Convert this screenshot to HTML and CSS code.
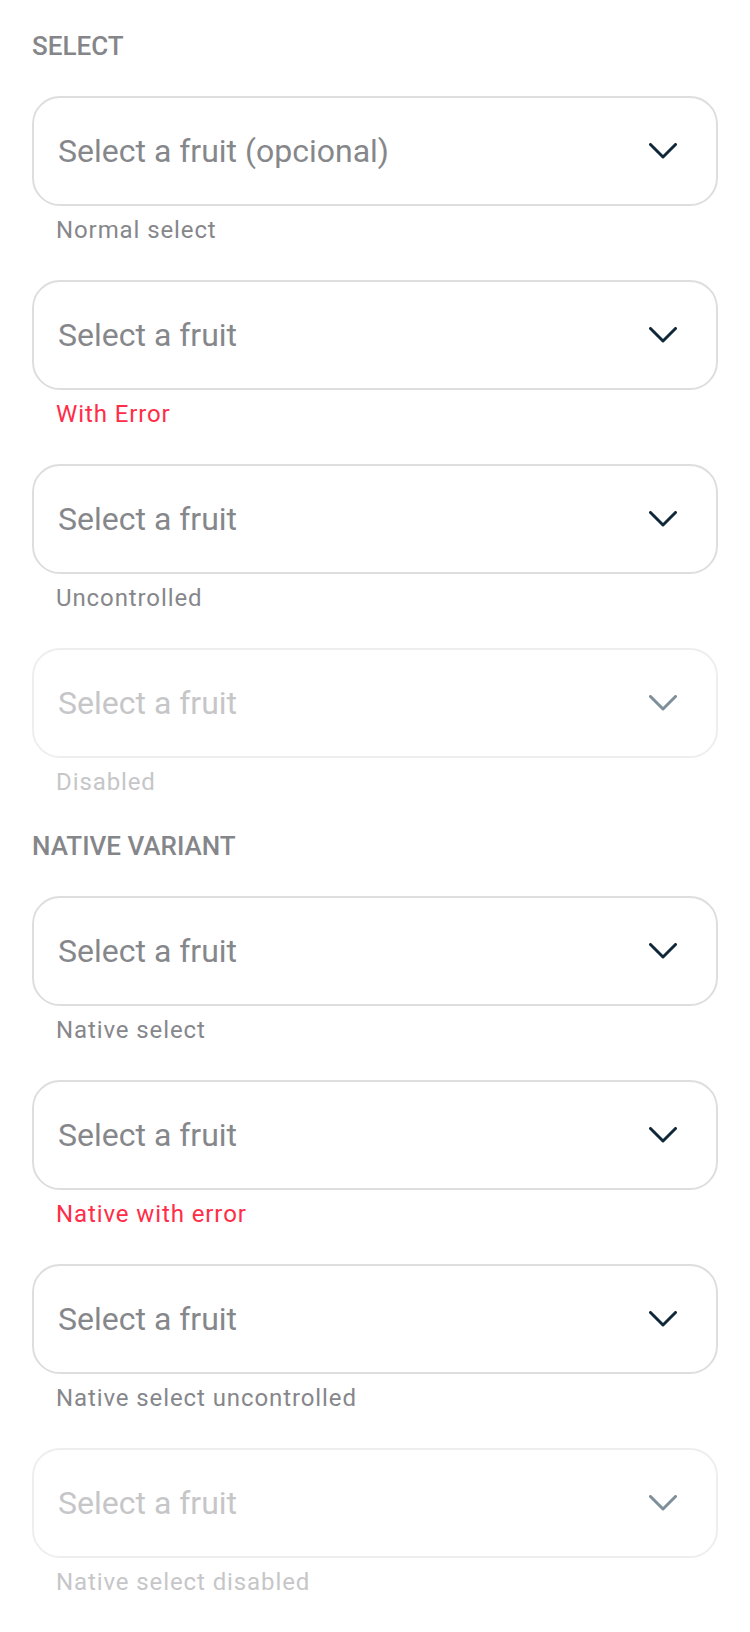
FILE: index.html
```html
<!DOCTYPE html>
<html lang="en">
<head>
<meta charset="utf-8">
<title>Select</title>
<link rel="stylesheet" href="styles.css">
</head>
<body>
<main class="page">
  <section class="section">
    <h2 class="section-title">SELECT</h2>
    <div class="fields">
      <div class="field">
        <div class="select">
          <span class="select-value">Select a fruit (opcional)</span>
          <svg class="chevron" viewBox="0 0 28 16" aria-hidden="true"><polyline points="1.5,1.5 14,14 26.5,1.5"/></svg>
        </div>
        <div class="helper">Normal select</div>
      </div>
      <div class="field">
        <div class="select">
          <span class="select-value">Select a fruit</span>
          <svg class="chevron" viewBox="0 0 28 16" aria-hidden="true"><polyline points="1.5,1.5 14,14 26.5,1.5"/></svg>
        </div>
        <div class="helper helper-error">With Error</div>
      </div>
      <div class="field">
        <div class="select">
          <span class="select-value">Select a fruit</span>
          <svg class="chevron" viewBox="0 0 28 16" aria-hidden="true"><polyline points="1.5,1.5 14,14 26.5,1.5"/></svg>
        </div>
        <div class="helper">Uncontrolled</div>
      </div>
      <div class="field field-disabled">
        <div class="select">
          <span class="select-value">Select a fruit</span>
          <svg class="chevron" viewBox="0 0 28 16" aria-hidden="true"><polyline points="1.5,1.5 14,14 26.5,1.5"/></svg>
        </div>
        <div class="helper">Disabled</div>
      </div>
    </div>
  </section>
  <section class="section">
    <h2 class="section-title">NATIVE VARIANT</h2>
    <div class="fields">
      <div class="field">
        <div class="select">
          <span class="select-value">Select a fruit</span>
          <svg class="chevron" viewBox="0 0 28 16" aria-hidden="true"><polyline points="1.5,1.5 14,14 26.5,1.5"/></svg>
        </div>
        <div class="helper">Native select</div>
      </div>
      <div class="field">
        <div class="select">
          <span class="select-value">Select a fruit</span>
          <svg class="chevron" viewBox="0 0 28 16" aria-hidden="true"><polyline points="1.5,1.5 14,14 26.5,1.5"/></svg>
        </div>
        <div class="helper helper-error">Native with error</div>
      </div>
      <div class="field">
        <div class="select">
          <span class="select-value">Select a fruit</span>
          <svg class="chevron" viewBox="0 0 28 16" aria-hidden="true"><polyline points="1.5,1.5 14,14 26.5,1.5"/></svg>
        </div>
        <div class="helper">Native select uncontrolled</div>
      </div>
      <div class="field field-disabled">
        <div class="select">
          <span class="select-value">Select a fruit</span>
          <svg class="chevron" viewBox="0 0 28 16" aria-hidden="true"><polyline points="1.5,1.5 14,14 26.5,1.5"/></svg>
        </div>
        <div class="helper">Native select disabled</div>
      </div>
    </div>
  </section>
</main>
</body>
</html>
```

FILE: styles.css
```css
* {
  box-sizing: border-box;
}

html, body {
  margin: 0;
  padding: 0;
  background: #ffffff;
}

body {
  font-family: Roboto, "Liberation Sans", Arial, sans-serif;
  color: #86878b;
}

.page {
  display: flex;
  flex-direction: column;
  gap: 33px;
  padding: 31px 32px 0 32px;
}

.section {
  display: flex;
  flex-direction: column;
  gap: 35px;
}

.section-title {
  margin: 0;
  font-size: 26px;
  line-height: 30px;
  font-weight: 500;
  color: #85868a;
  letter-spacing: 0;
}

.fields {
  display: flex;
  flex-direction: column;
  gap: 34px;
}

.field {
  display: flex;
  flex-direction: column;
  gap: 8px;
}

.select {
  height: 110px;
  border: 2px solid #dedede;
  border-radius: 28px;
  display: flex;
  align-items: center;
  justify-content: space-between;
  padding: 0 39px 0 24px;
  background: #ffffff;
}

.select-value {
  font-size: 32px;
  color: #86878b;
  line-height: 40px;
}

.chevron {
  width: 28px;
  height: 16px;
  fill: none;
  stroke: #10283a;
  stroke-width: 3;
  stroke-linecap: round;
  stroke-linejoin: round;
}

.helper {
  font-size: 24px;
  line-height: 32px;
  letter-spacing: 0.9px;
  padding-left: 24px;
  color: #86878b;
}

.helper-error {
  color: #ff2d48;
}

.field-disabled .select {
  border-color: #eeeeee;
}

.field-disabled .select-value,
.field-disabled .helper {
  color: #c6c6c8;
}

.field-disabled .chevron {
  stroke: #7f8f9a;
}
```
